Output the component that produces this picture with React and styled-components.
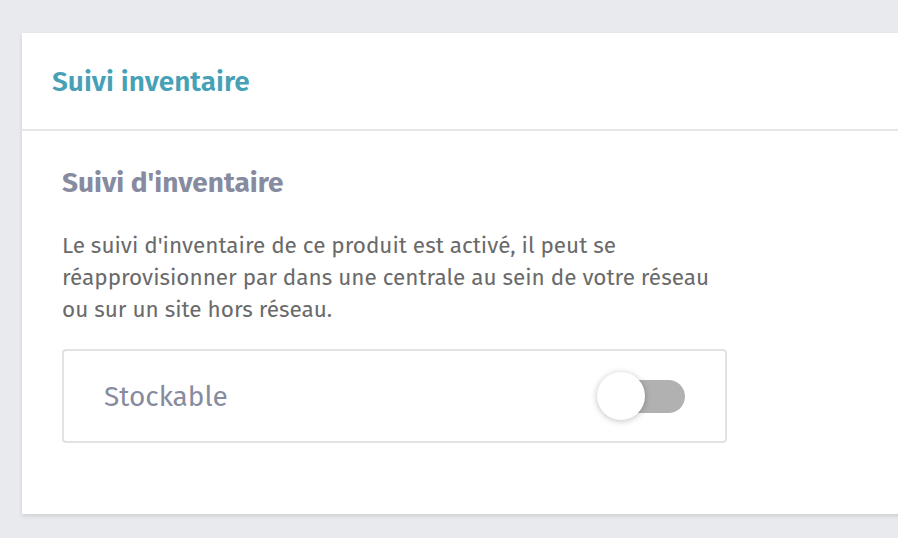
import styled, { createGlobalStyle } from "styled-components";

const GlobalStyle = createGlobalStyle`
  html, body {
    margin: 0;
    padding: 0;
    background: #e9eaee;
    overflow: hidden;
  }
  body {
    font-family: "Fira Sans", "Noto Sans", "Open Sans", sans-serif;
  }
`;

const Page = styled.div`
  width: 898px;
  height: 538px;
  padding: 33px 0 0 22px;
  box-sizing: border-box;
`;

const Card = styled.section`
  width: 900px;
  background: #ffffff;
  box-shadow: 0 2px 4px rgba(0, 0, 0, 0.12);
`;

const Header = styled.header`
  height: 96px;
  display: flex;
  align-items: center;
  padding: 0 30px;
  border-bottom: 2px solid #e6e6e8;
`;

const Title = styled.h2`
  margin: 0;
  font-size: 28px;
  font-weight: 600;
  color: #47a1b6;
`;

const Body = styled.div`
  padding: 32px 40px 71px;
`;

const Subtitle = styled.h3`
  margin: 0 0 27px;
  font-size: 28px;
  line-height: 40px;
  font-weight: 700;
  color: #878ba0;
`;

const Text = styled.p`
  margin: 0 0 23px;
  width: 660px;
  font-size: 22.5px;
  line-height: 32px;
  color: #6a6a6a;
`;

const Field = styled.div`
  width: 665px;
  height: 94px;
  box-sizing: border-box;
  border: 2px solid #e2e2e2;
  border-radius: 4px;
  display: flex;
  align-items: center;
  justify-content: space-between;
  padding: 0 40px 0 40px;
`;

const Label = styled.span`
  font-size: 28px;
  color: #878ba0;
`;

const Switch = styled.div`
  position: relative;
  width: 88px;
  height: 48px;
  display: flex;
  align-items: center;
  justify-content: flex-end;
`;

const Track = styled.div`
  width: 70px;
  height: 33px;
  border-radius: 17px;
  background: #b1b1b1;
`;

const Knob = styled.div`
  position: absolute;
  left: 0;
  top: 0;
  width: 48px;
  height: 48px;
  border-radius: 50%;
  background: #ffffff;
  box-shadow: 0 1px 6px rgba(0, 0, 0, 0.25);
`;

export default function App() {
  return (
    <>
      <GlobalStyle />
      <Page>
        <Card>
          <Header>
            <Title>Suivi inventaire</Title>
          </Header>
          <Body>
            <Subtitle>Suivi d'inventaire</Subtitle>
            <Text>
              Le suivi d'inventaire de ce produit est activé, il peut se
              réapprovisionner par dans une centrale au sein de votre réseau
              ou sur un site hors réseau.
            </Text>
            <Field>
              <Label>Stockable</Label>
              <Switch>
                <Track />
                <Knob />
              </Switch>
            </Field>
          </Body>
        </Card>
      </Page>
    </>
  );
}
